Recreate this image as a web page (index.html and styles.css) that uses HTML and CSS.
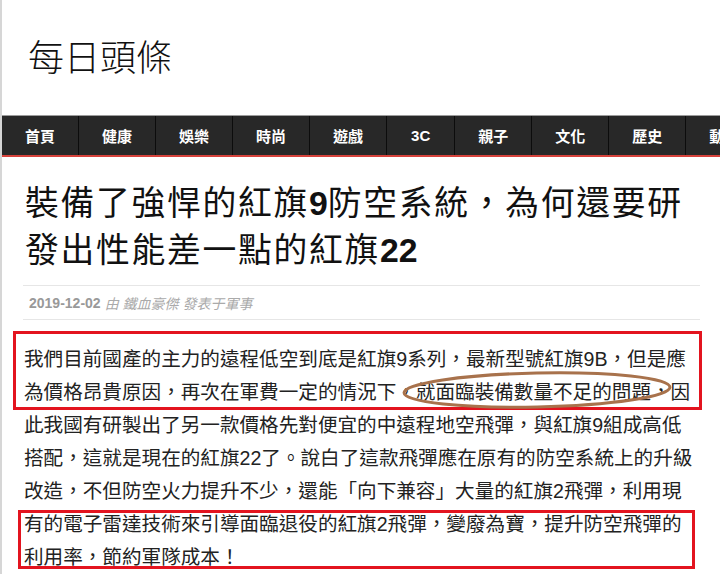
FILE: index.html
```html
<!DOCTYPE html>
<html lang="zh-Hant">
<head>
    <meta charset="UTF-8">
    <title>每日頭條</title>
    <meta name="viewport" content="width=device-width, initial-scale=1.0">
    <link rel="stylesheet" href="styles.css">
</head>
<body>
    <header class="site-header">
        <div class="site-title">每日頭條</div>
    </header>
    <nav class="main-nav">
        <a href="#">首頁</a>
        <a href="#">健康</a>
        <a href="#">娛樂</a>
        <a href="#">時尚</a>
        <a href="#">遊戲</a>
        <a href="#" class="latin">3C</a>
        <a href="#">親子</a>
        <a href="#">文化</a>
        <a href="#">歷史</a>
        <a href="#">動漫</a>
        <a href="#">科技</a>
    </nav>
    <div class="article">
        <h1 class="article-title">裝備了強悍的紅旗<b class="num">9</b>防空系統，為何還要研<br>發出性能差一點的紅旗<b class="num">22</b></h1>
        <div class="meta">
            <span class="date">2019-12-02</span>
            <span class="by">由 鐵血豪傑 發表于軍事</span>
        </div>
        <div class="content">
            <p>我們目前國產的主力的遠程低空到底是紅旗9系列，最新型號紅旗9B，但是應為價格昂貴原因，再次在軍費一定的情況下，就面臨裝備數量不足的問題，因此我國有研製出了另一款價格先對便宜的中遠程地空飛彈，與紅旗9組成高低搭配，這就是現在的紅旗22了。說白了這款飛彈應在原有的防空系統上的升級改造，不但防空火力提升不少，還能「向下兼容」大量的紅旗2飛彈，利用現有的電子雷達技術來引導面臨退役的紅旗2飛彈，變廢為寶，提升防空飛彈的利用率，節約軍隊成本！</p>
            <!-- annotations drawn over the text -->
            <div class="mark mark-top"></div>
            <div class="mark mark-bottom"></div>
            <svg class="circle" width="275" height="42" viewBox="0 0 275 42">
                <ellipse cx="137" cy="21" rx="133" ry="17" fill="none" stroke="#a8724c" stroke-width="3" transform="rotate(-1.2 137 21)"/>
            </svg>
        </div>
    </div>
</body>
</html>
```

FILE: styles.css
```css
body {
    margin: 0;
    padding: 0;
    border-left: 2px solid #d6d6d6;
    background: #fff;
    font-family: "Liberation Sans", "Noto Sans CJK TC", sans-serif;
    color: #222;
    overflow: hidden;
}
.site-header {
    height: 115px;
    display: flex;
    align-items: center;
    padding-left: 26px;
    padding-bottom: 5px;
    box-sizing: border-box;
}
.site-title {
    font-family: "Noto Sans CJK TC", sans-serif;
    font-size: 36px;
    font-weight: 300;
    line-height: 1;
    color: #111;
}
.main-nav {
    display: flex;
    height: 39px;
    background-color: #282828;
    border-top: 1px solid #9c9c9c;
    border-bottom: 2px solid #d6423b;
    white-space: nowrap;
    overflow: hidden;
}
.main-nav a {
    display: flex;
    align-items: center;
    padding: 0 23px;
    border-right: 1px solid #0c0c0c;
    color: #fff;
    font-family: "Liberation Sans", "Noto Sans CJK TC", sans-serif;
    font-size: 15px;
    font-weight: bold;
    text-decoration: none;
    flex-shrink: 0;
}
.main-nav a.latin {
    padding: 0 24px;
}
.article {
    margin-left: 21px;
    width: 677px;
}
.article-title {
    margin: 23px 0 0 2px;
    font-family: "Liberation Sans", "Noto Sans CJK TC", sans-serif;
    font-size: 33.8px;
    font-weight: normal;
    letter-spacing: 1.7px;
    line-height: 47px;
    color: #111;
    white-space: nowrap;
}
.article-title .num {
    font-weight: bold;
    letter-spacing: 0;
}
.meta {
    margin-top: 11px;
    height: 33px;
    display: flex;
    align-items: center;
    gap: 4px;
    padding-left: 6px;
    border-top: 1px solid #e6e6e6;
    border-bottom: 1px solid #e6e6e6;
}
.date {
    font-size: 14px;
    font-weight: bold;
    color: #999;
}
.by {
    font-size: 14px;
    font-style: italic;
    color: #aaa;
}
.content {
    position: relative;
    margin: 23px 0 0 1px;
}
.content p {
    margin: 0;
    width: 673px;
    font-size: 19.6px;
    line-height: 33px;
    color: #222;
}
.mark {
    position: absolute;
    border: 3px solid #e3141f;
    box-sizing: border-box;
}
.mark-top {
    left: -11px;
    top: -12px;
    width: 689px;
    height: 79px;
}
.mark-bottom {
    left: -6px;
    top: 167px;
    width: 677px;
    height: 59px;
}
.circle {
    position: absolute;
    left: 376px;
    top: 26px;
}
```
